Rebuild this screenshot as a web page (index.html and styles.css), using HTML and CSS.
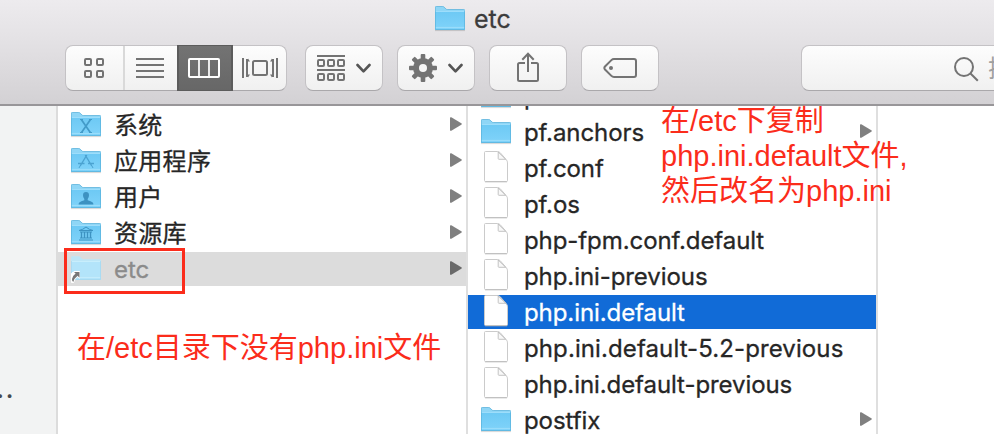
FILE: index.html
```html
<!DOCTYPE html>
<html lang="zh-CN">
<head>
<meta charset="utf-8">
<title>etc</title>
<link rel="stylesheet" href="styles.css">
</head>
<body>
<svg class="defs" width="0" height="0" aria-hidden="true">
  <defs>
    <linearGradient id="front" x1="0" y1="0" x2="0" y2="1"><stop offset="0" stop-color="#6dc9f4"/><stop offset="1" stop-color="#80d3fa"/></linearGradient>
    <symbol id="folder" viewBox="0 0 30 26">
      <path d="M0 24.6h30" stroke="#000" stroke-opacity=".16" stroke-width="1"/>
      <path d="M0 1.5Q0 .3 1.2 .3h6.6q.8 0 1.4.6l1.9 1.9q.5.5 1.3.5h16.4q1.2 0 1.2 1.2V24H0z" fill="#8fd6f6"/>
      <path d="M.3 5V1.6Q.3.5 1.4.5h6.3q.8 0 1.4.6l1.8 1.9q.5.5 1.3.5h16.4q1.1 0 1.1 1" fill="none" stroke="#63b5dc" stroke-width=".8"/>
      <path d="M0 5.4h30V23.3q0 .7-.7.7H.7Q0 24 0 23.3z" fill="url(#front)"/>
      <path d="M.4 5v18.5h29.2V5" fill="none" stroke="#59b2dc" stroke-width=".8"/>
      <path d="M.8 5.5h28.4M.8 21.4h28.4" stroke="#a4e1fc" stroke-width=".8"/>
    </symbol>
    <symbol id="folder-pale" viewBox="0 0 30 26">
      <path d="M0 1.5Q0 .3 1.2 .3h6.6q.8 0 1.4.6l1.9 1.9q.5.5 1.3.5h16.4q1.2 0 1.2 1.2V24H0z" fill="#bde6f7"/>
      <path d="M0 5.4h30V23.3q0 .7-.7.7H.7Q0 24 0 23.3z" fill="#b3e4fa"/>
      <path d="M.4 5v18.500h29.200V5" fill="none" stroke="#a5d7ee" stroke-width=".8"/>
      <path d="M.8 5.5h28.4M.8 21.4h28.4" stroke="#ccf0fd" stroke-width=".8"/>
    </symbol>
    <symbol id="file" viewBox="0 0 26 34">
      <path d="M1.500 2.500Q1.500 1.500 2.500 1.500h11.700q1.800 0 3 1.200l6.100 7q1.200 1.300 1.200 3.200v17.600q0 1-1 1h-21q-1 0-1-1z" fill="#fff" stroke="#cbcbcb" stroke-width="1"/>
      <path d="M2 31.900h22" stroke="#b5b5b5" stroke-width=".7"/>
      <path d="M15.200 2v6.500q0 .8.8.8h6.700" fill="#f8f8f8" stroke="#c4c4c4" stroke-width="1"/>
      <path d="M15.200 2l7.500 7.300" stroke="#aaa" stroke-width=".7"/>
    </symbol>
    <symbol id="arrow" viewBox="0 0 12 14"><path d="M0 1Q0-.2 1.300.3l10 6q1 .7 0 1.400l-10 6Q0 14.200 0 13z" fill="currentColor"/></symbol>
  </defs>
</svg>
<div class="window">
  <header class="titlebar">
    <div class="title"><svg width="30" height="26"><use href="#folder"/></svg><span>etc</span></div>
    <div class="toolbar">
      <div class="segments">
        <div class="seg seg-icons"><svg width="20" height="20" viewBox="0 0 20 20" fill="none" stroke="#737373" stroke-width="2"><rect x="1" y="1" width="6" height="6" rx="1"/><rect x="13" y="1" width="6" height="6" rx="1"/><rect x="1" y="13" width="6" height="6" rx="1"/><rect x="13" y="13" width="6" height="6" rx="1"/></svg></div>
        <div class="seg seg-list"><svg width="28" height="20" viewBox="0 0 28 20" stroke="#737373" stroke-width="2"><path d="M0 1h28M0 7h28M0 13h28M0 19h28"/></svg></div>
        <div class="seg seg-columns"><svg width="32" height="20" viewBox="0 0 32 20" fill="none" stroke="#fff" stroke-width="2"><rect x="1" y="1" width="30" height="18" rx="1"/><path d="M11 1v18M21 1v18" stroke-width="1.700"/></svg></div>
        <div class="seg seg-cover"><svg width="36" height="20" viewBox="0 0 36 20" fill="none" stroke="#737373" stroke-width="2"><rect x="11" y="3" width="14" height="14" rx="1.500"/><path d="M1 0v20M35 0v20"/><path d="M5 1v18M31 1v18"/><path d="M6 .5l2 3H6zM6 19.500l2-3H6zM30 .5l-2 3h2zM30 19.500l-2-3h2z" fill="#737373" stroke="none"/></svg></div>
      </div>
      <div class="button"><svg width="54" height="26" viewBox="0 0 54 26" fill="none" stroke="#737373" stroke-width="2"><path d="M0 1h28M0 15h28"/><rect x="1" y="5" width="6" height="6" rx="1"/><rect x="11" y="5" width="6" height="6" rx="1"/><rect x="21" y="5" width="6" height="6" rx="1"/><rect x="1" y="19" width="6" height="6" rx="1"/><rect x="11" y="19" width="6" height="6" rx="1"/><rect x="21" y="19" width="6" height="6" rx="1"/><path d="M40.500 10l6 6.300 6-6.300" stroke="#555" stroke-width="2.600" stroke-linecap="round" stroke-linejoin="round"/></svg></div>
      <div class="button"><svg width="54" height="28" viewBox="0 0 54 28"><g fill="#737373"><rect x="11.700" y="0" width="4.600" height="28" rx="1"/><rect x="11.700" y="0" width="4.600" height="28" rx="1" transform="rotate(45 14 14)"/><rect x="11.700" y="0" width="4.600" height="28" rx="1" transform="rotate(90 14 14)"/><rect x="11.700" y="0" width="4.600" height="28" rx="1" transform="rotate(135 14 14)"/><circle cx="14" cy="14" r="10"/></g><circle cx="14" cy="14" r="4" fill="#f6f6f6"/><path d="M40.500 11l6 6.300 6-6.300" fill="none" stroke="#555" stroke-width="2.600" stroke-linecap="round" stroke-linejoin="round"/></svg></div>
      <div class="button share"><svg width="22" height="30" viewBox="0 0 22 30" fill="none" stroke="#737373" stroke-width="2"><path d="M8 11H2.500Q1 11 1 12.500v15Q1 29 2.500 29h17q1.500 0 1.500-1.500v-15Q21 11 19.500 11H14M11 20V2M5.300 7.700L11 1.700l5.700 6"/></svg></div>
      <div class="button"><svg width="34" height="20" viewBox="0 0 34 20" fill="none" stroke="#737373" stroke-width="2"><path d="M11 1h20q2 0 2 2v14q0 2-2 2H11q-1.500 0-2.600-1.100L2 11.500Q.7 10 2 8.500l6.400-6.400Q9.500 1 11 1z"/><circle cx="8" cy="10" r="2" fill="#737373" stroke="none"/></svg></div>
      <div class="search"><svg width="26" height="26" viewBox="0 0 26 26" fill="none" stroke="#737373" stroke-width="2"><circle cx="11" cy="11" r="9"/><path d="M17.500 17.500l7.300 7.300"/></svg><span>搜索</span></div>
    </div>
  </header>
  <main class="browser">
    <aside class="sidebar">...</aside>
    <section class="column first">
      <div class="row"><span class="icon"><svg width="30" height="26"><use href="#folder"/><path d="M10.300 7.500L19.300 20.500M19.500 7.500L10.500 20.500" stroke="#439bc9" stroke-width="1.700"/><path d="M9 7.500h3M18 7.500h3M9 20.500h3M18 20.500h3" stroke="#439bc9"/></svg></span><span class="name">系统</span><svg class="arrow" width="12" height="14"><use href="#arrow"/></svg></div>
      <div class="row"><span class="icon"><svg width="30" height="26"><use href="#folder"/><path d="M15.800 7L9.200 18M14.200 7l6.600 11M7 15.500h6.500M17 15.500h6" stroke="#4ba3d1" stroke-width="1.400"/><path d="M9 18l-1 2M21 18l1 2" stroke="#4ba3d1"/></svg></span><span class="name">应用程序</span><svg class="arrow" width="12" height="14"><use href="#arrow"/></svg></div>
      <div class="row"><span class="icon"><svg width="30" height="26"><use href="#folder"/><path d="M15 8q3 0 3 3.200 0 2.300-1.300 3.800v1.300q3.300 1 5 2.200.7.600.7 2H7.600q0-1.400.7-2 1.700-1.200 5-2.200V15Q12 13.500 12 11.200 12 8 15 8z" fill="#3d92c1"/></svg></span><span class="name">用户</span><svg class="arrow" width="12" height="14"><use href="#arrow"/></svg></div>
      <div class="row"><span class="icon"><svg width="30" height="26"><use href="#folder"/><path d="M8 10.500q3.500-.5 7-3.500 3.500 3 7 3.500z" fill="none" stroke="#3d92c1"/><path d="M10.500 12v6M13.500 12v6M16.500 12v6M19.500 12v6" stroke="#3d92c1" stroke-width="1.400"/><path d="M9 12h12M9 18h12M8 20h14" stroke="#3d92c1"/></svg></span><span class="name">资源库</span><svg class="arrow" width="12" height="14"><use href="#arrow"/></svg></div>
      <div class="row current"><span class="icon"><svg width="30" height="30"><use href="#folder-pale" width="30" height="26"/><path d="M.5 17.500Q2 15.500 3.500 17l-.6-1.500h5.600v6.700l-2-1.800Q3.200 22.500 2.600 26.500H.5z" fill="#fff" stroke="#fff"/><path d="M3 16h5.500v5.700l-1.900-1.900Q3.200 22.300 2.300 26 .8 24.800 1 23q.3-2.800 3.600-5.400z" fill="#777"/></svg></span><span class="name">etc</span><svg class="arrow" width="12" height="14"><use href="#arrow"/></svg></div>
    </section>
    <section class="column second">
      <div class="row"><span class="icon"><svg width="30" height="26"><use href="#folder"/></svg></span><span class="name">periodic</span><svg class="arrow" width="12" height="14"><use href="#arrow"/></svg></div>
      <div class="row"><span class="icon"><svg width="30" height="26"><use href="#folder"/></svg></span><span class="name">pf.anchors</span><svg class="arrow" width="12" height="14"><use href="#arrow"/></svg></div>
      <div class="row"><span class="icon file"><svg width="26" height="34"><use href="#file"/></svg></span><span class="name">pf.conf</span></div>
      <div class="row"><span class="icon file"><svg width="26" height="34"><use href="#file"/></svg></span><span class="name">pf.os</span></div>
      <div class="row"><span class="icon file"><svg width="26" height="34"><use href="#file"/></svg></span><span class="name">php-fpm.conf.default</span></div>
      <div class="row"><span class="icon file"><svg width="26" height="34"><use href="#file"/></svg></span><span class="name">php.ini-previous</span></div>
      <div class="row selected"><span class="icon file"><svg width="26" height="34"><use href="#file"/></svg></span><span class="name">php.ini.default</span></div>
      <div class="row"><span class="icon file"><svg width="26" height="34"><use href="#file"/></svg></span><span class="name versioned">php.ini.default-5.2-previous</span></div>
      <div class="row"><span class="icon file"><svg width="26" height="34"><use href="#file"/></svg></span><span class="name">php.ini.default-previous</span></div>
      <div class="row"><span class="icon"><svg width="30" height="26"><use href="#folder"/></svg></span><span class="name">postfix</span><svg class="arrow" width="12" height="14"><use href="#arrow"/></svg></div>
    </section>
    <section class="column last"></section>
  </main>
  <div class="highlight"></div>
  <p class="note note-left">在/etc目录下没有php.ini文件</p>
  <p class="note note-right">在/etc下复制<br>php.ini.default文件,<br>然后改名为php.ini</p>
</div>
</body>
</html>
```
FILE: styles.css
```css
* { box-sizing: border-box; }
body { margin: 0; }
svg { display: block; flex: none; }
.defs { position: absolute; }
.window {
  position: relative;
  display: flex;
  flex-direction: column;
  width: 994px;
  height: 434px;
  overflow: hidden;
  background: #fff;
  color: #262626;
  font-family: Inter, "Noto Sans CJK SC", sans-serif;
  font-size: 24px;
}
.titlebar {
  flex: none;
  height: 106px;
  border-bottom: 2px solid #989699;
  background: linear-gradient(#edebee 0, #e5e3e6 35px, #d3d1d4 104px);
}
.title {
  display: flex;
  height: 45px;
  padding: 6px 0 0 435px;
  gap: 9px;
  line-height: 26px;
  color: #3c3c3c;
  font-size: 25px;
  -webkit-text-stroke: .3px;
}
.toolbar { display: flex; gap: 14px; padding-left: 65px; }
.segments, .button, .search {
  flex: none;
  height: 46px;
  border: 1px solid #c4c2c5;
  border-bottom-color: #aaa8ab;
  border-radius: 8px;
  background: linear-gradient(#fdfdfd, #f0f0f0);
}
.segments { display: flex; width: 222px; margin-right: 4px; }
.seg { display: flex; align-items: center; justify-content: center; }
.seg-icons { width: 59px; padding-right: 1px; border-right: 2px solid #d9d9d9; }
.seg-list { width: 52px; padding-right: 2px; }
.seg-columns {
  width: 56px;
  margin: -1px 0;
  padding-right: 2px;
  background: linear-gradient(#737373, #676767);
  border: 1px solid #5c5c5c;
  border-width: 1px 2px;
}
.seg-cover { width: 53px; }
.button { display: flex; align-items: center; justify-content: center; width: 78px; }
.share { padding-bottom: 2px; }
.search { display: flex; width: 300px; margin-left: 128px; padding: 10px 0 0 151px; gap: 9px; color: #a0a0a0; line-height: 25px; }
.search span { white-space: nowrap; }
.browser { display: flex; flex: 1; min-height: 0; }
.sidebar {
  display: flex;
  flex: none;
  justify-content: flex-end;
  width: 58px;
  padding: 269px 41px 0 0;
  border-right: 2px solid #dcdcdc;
  background: #f2f3f3;
  color: #454850;
  font-weight: 600;
  line-height: 30px;
  letter-spacing: 1.7px;
}
.column { display: flex; flex: none; flex-direction: column; gap: 2px; width: 410px; overflow: hidden; border-right: 2px solid #dfdfdf; }
.column.first { padding-top: 2px; }
.second .row:first-child { margin-top: -27px; }
.column.last { flex: 1; border: 0; }
.row { display: flex; flex: none; height: 34px; padding: 0 4px 0 13px; }
.icon { width: 30px; height: 34px; padding-top: 4px; }
.icon.file { padding: 0 0 0 2px; margin-top: -1px; }
.name { flex: 1; padding-left: 13px; line-height: 35px; letter-spacing: -.08px; white-space: nowrap; -webkit-text-stroke: .3px; }
.first .name { letter-spacing: .3px; }
.current .name { letter-spacing: 0; }
.name.versioned { letter-spacing: .1px; }
.arrow { margin-top: 9px; color: #808080; }
.current { background: #dcdcdc; }
.current .name { color: #8b8b8b; }
.current .arrow { color: #6a6a6a; }
.selected { background: #116bd7; color: #fff; }
.highlight { position: absolute; left: 64px; top: 248px; width: 121px; height: 46px; border: 3px solid #fb2c1b; }
.note { position: absolute; margin: 0; color: #fb2c1b; font: 400 29px/35px "Liberation Sans", "Noto Sans CJK SC", sans-serif; white-space: nowrap; }
.note-left { left: 77px; top: 331px; }
.note-right { left: 661px; top: 104px; }
```
